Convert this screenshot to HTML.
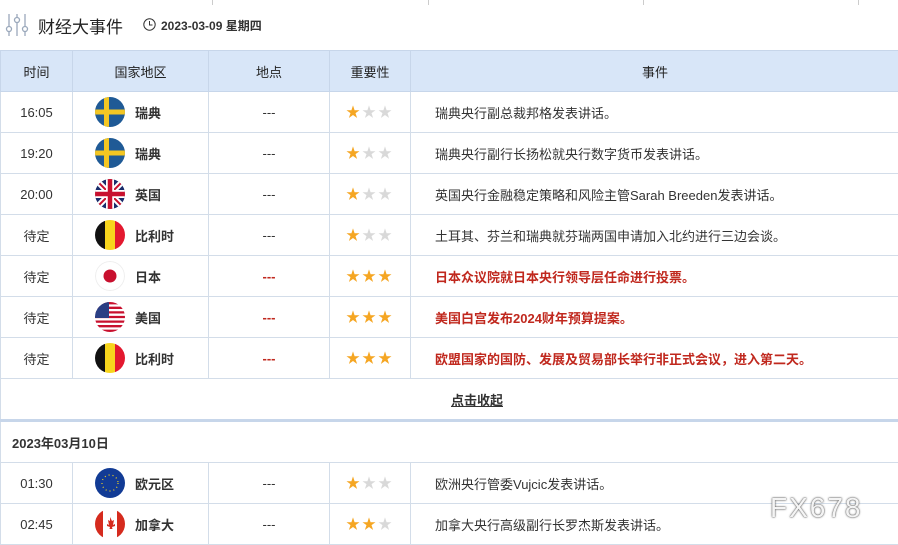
<!DOCTYPE html>
<html><head><meta charset="utf-8"><style>
body{margin:0;width:898px;height:544px;overflow:hidden;background:#fff;font-family:"Liberation Sans","Noto Sans CJK SC",sans-serif;color:#333;position:relative}
.tick{position:absolute;top:0;width:1px;height:5px;background:#ccc}
table{position:absolute;left:0;top:50px;width:900px;border-collapse:collapse;table-layout:fixed}
td,th{border:1px solid #d3dde9;text-align:center;font-size:13px;height:40px;padding:0}
th{background:#d8e6f8;font-weight:normal;color:#222;height:40px;border-color:#c7d6ea}
.ev{text-align:left;padding-left:24px}
.red{color:#c0281e;font-weight:bold}
.c{display:flex;align-items:center;padding-left:22px;gap:10px;font-weight:bold}
.f{width:30px;height:30px;border-radius:50%;overflow:hidden;flex:none}
.s{font-size:14px;letter-spacing:2px}
.y{color:#f5a623}.g{color:#d9d9d9}
</style></head><body>
<div class="tick" style="left:212px"></div><div class="tick" style="left:428px"></div><div class="tick" style="left:643px"></div><div class="tick" style="left:858px"></div>
<svg style="position:absolute;left:5px;top:14px" width="24" height="22" viewBox="0 0 24 22" fill="none" stroke="#9aa8bb" stroke-width="1.3"><line x1="4" y1="0" x2="4" y2="12"/><circle cx="4" cy="15" r="2.5"/><line x1="4" y1="18" x2="4" y2="22"/><line x1="12" y1="0" x2="12" y2="3"/><circle cx="12" cy="6" r="2.5"/><line x1="12" y1="9" x2="12" y2="22"/><line x1="20" y1="0" x2="20" y2="12"/><circle cx="20" cy="15" r="2.5"/><line x1="20" y1="18" x2="20" y2="22"/></svg>
<div style="position:absolute;left:38px;top:13px;font-size:17px;color:#222">财经大事件</div>
<svg style="position:absolute;left:143px;top:18px" width="13" height="13" viewBox="0 0 13 13" fill="none" stroke="#333" stroke-width="1"><circle cx="6.5" cy="6.5" r="5.7"/><path d="M6.5 3v4h3"/></svg>
<div style="position:absolute;left:161px;top:17px;font-size:12px;font-weight:bold;color:#333">2023-03-09 星期四</div>
<table>
<colgroup><col style="width:72px"><col style="width:136px"><col style="width:121px"><col style="width:81px"><col></colgroup>
<tr><th>时间</th><th>国家地区</th><th>地点</th><th>重要性</th><th>事件</th></tr>
<tr><td>16:05</td><td><div class="c"><svg class="f" viewBox="0 0 30 30"><rect width="30" height="30" fill="#1f5a96"/><rect x="9" width="5" height="30" fill="#f3c623"/><rect y="12.5" width="30" height="5" fill="#f3c623"/></svg>瑞典</div></td><td>---</td><td class="s"><span class="y">★</span><span class="g">★★</span></td><td class="ev">瑞典央行副总裁邦格发表讲话。</td></tr>
<tr><td>19:20</td><td><div class="c"><svg class="f" viewBox="0 0 30 30"><rect width="30" height="30" fill="#1f5a96"/><rect x="9" width="5" height="30" fill="#f3c623"/><rect y="12.5" width="30" height="5" fill="#f3c623"/></svg>瑞典</div></td><td>---</td><td class="s"><span class="y">★</span><span class="g">★★</span></td><td class="ev">瑞典央行副行长扬松就央行数字货币发表讲话。</td></tr>
<tr><td>20:00</td><td><div class="c"><svg class="f" viewBox="0 0 30 30"><rect width="30" height="30" fill="#1a2d6b"/><path d="M0 0L30 30M30 0L0 30" stroke="#fff" stroke-width="6"/><path d="M0 0L30 30M30 0L0 30" stroke="#c8102e" stroke-width="2"/><path d="M15 0V30M0 15H30" stroke="#fff" stroke-width="8"/><path d="M15 0V30M0 15H30" stroke="#c8102e" stroke-width="4.5"/></svg>英国</div></td><td>---</td><td class="s"><span class="y">★</span><span class="g">★★</span></td><td class="ev">英国央行金融稳定策略和风险主管Sarah Breeden发表讲话。</td></tr>
<tr><td>待定</td><td><div class="c"><svg class="f" viewBox="0 0 30 30"><rect width="10" height="30" fill="#111"/><rect x="10" width="10" height="30" fill="#f7d51d"/><rect x="20" width="10" height="30" fill="#e3192f"/></svg>比利时</div></td><td>---</td><td class="s"><span class="y">★</span><span class="g">★★</span></td><td class="ev">土耳其、芬兰和瑞典就芬瑞两国申请加入北约进行三边会谈。</td></tr>
<tr><td>待定</td><td><div class="c"><svg class="f" viewBox="0 0 30 30"><circle cx="15" cy="15" r="14.5" fill="#fff" stroke="#eee"/><circle cx="15" cy="15" r="6.5" fill="#c8102e"/></svg>日本</div></td><td class="red">---</td><td class="s"><span class="y">★★★</span></td><td class="ev red">日本众议院就日本央行领导层任命进行投票。</td></tr>
<tr><td>待定</td><td><div class="c"><svg class="f" viewBox="0 0 30 30"><rect width="30" height="30" fill="#fff"/><path d="M0 1.2H30M0 5.8H30M0 10.4H30M0 15H30M0 19.6H30M0 24.2H30M0 28.8H30" stroke="#c8102e" stroke-width="2.3"/><rect width="14" height="16" fill="#2a3f84"/></svg>美国</div></td><td class="red">---</td><td class="s"><span class="y">★★★</span></td><td class="ev red">美国白宫发布2024财年预算提案。</td></tr>
<tr><td>待定</td><td><div class="c"><svg class="f" viewBox="0 0 30 30"><rect width="10" height="30" fill="#111"/><rect x="10" width="10" height="30" fill="#f7d51d"/><rect x="20" width="10" height="30" fill="#e3192f"/></svg>比利时</div></td><td class="red">---</td><td class="s"><span class="y">★★★</span></td><td class="ev red">欧盟国家的国防、发展及贸易部长举行非正式会议，进入第二天。</td></tr>
<tr><td colspan="5" style="border-bottom:3px solid #c7d6ea"><span style="font-weight:bold;text-decoration:underline;position:relative;left:27px">点击收起</span></td></tr>
<tr><td colspan="5" style="text-align:left;padding-left:11px;font-weight:bold">2023年03月10日</td></tr>
<tr><td>01:30</td><td><div class="c"><svg class="f" viewBox="0 0 30 30"><rect width="30" height="30" fill="#123b95"/><circle cx="15" cy="15" r="8" fill="none" stroke="#f7d51d" stroke-width="1.2" stroke-dasharray="1 3"/></svg>欧元区</div></td><td>---</td><td class="s"><span class="y">★</span><span class="g">★★</span></td><td class="ev">欧洲央行管委Vujcic发表讲话。</td></tr>
<tr><td>02:45</td><td><div class="c"><svg class="f" viewBox="0 0 30 30"><rect width="30" height="30" fill="#fff"/><rect width="8" height="30" fill="#d52b1e"/><rect x="22" width="8" height="30" fill="#d52b1e"/><path d="M15 8l2 4 2-1-1 5 2-1v2l-3 1 .5 2H14.5l.5-2-3-1v-2l2 1-1-5 2 1z" fill="#d52b1e"/></svg>加拿大</div></td><td>---</td><td class="s"><span class="y">★★</span><span class="g">★</span></td><td class="ev">加拿大央行高级副行长罗杰斯发表讲话。</td></tr>
</table>
<div style="position:absolute;left:770px;top:492px;font-size:28px;color:#f4f4f4;letter-spacing:2px;text-shadow:0 0 2px #555,0 0 1px #555;font-family:'Liberation Sans',sans-serif">FX678</div>
</body></html>
